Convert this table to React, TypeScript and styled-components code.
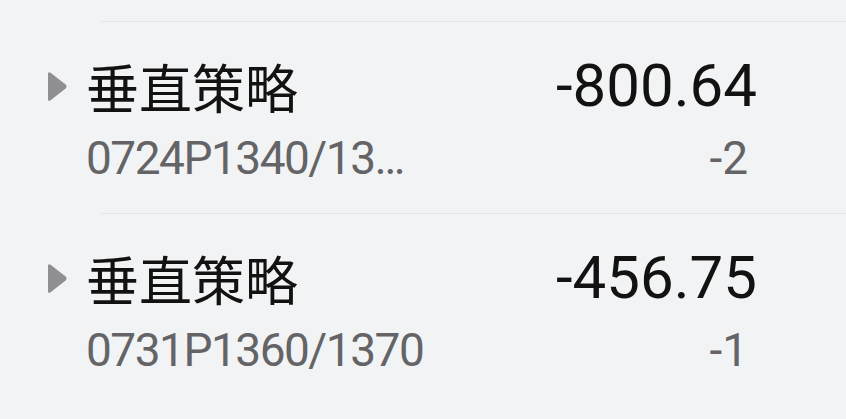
import React from 'react';
import styled, { createGlobalStyle } from 'styled-components';

const GlobalStyle = createGlobalStyle`
  html, body {
    margin: 0;
    padding: 0;
    background: #f2f3f5;
  }
  body {
    font-family: Roboto, "Noto Sans CJK SC", sans-serif;
  }
`;

type Position = {
  name: string;
  code: string;
  pnl: string;
  qty: string;
};

const positions: Position[] = [
  { name: '垂直策略', code: '0724P1340/13…', pnl: '-800.64', qty: '-2' },
  { name: '垂直策略', code: '0731P1360/1370', pnl: '-456.75', qty: '-1' }
];

const List = styled.div`
  box-sizing: border-box;
  padding-top: 21px;
  width: 846px;
  height: 419px;
  overflow: hidden;
`;

const Divider = styled.div`
  height: 1px;
  margin-left: 101px;
  background: #e3e4e6;
`;

const Row = styled.div`
  display: grid;
  grid-template-columns: 19px 1fr auto;
  grid-template-rows: 64px 50px;
  column-gap: 19px;
  row-gap: 15px;
  padding: 32px 89px 30px 48px;
  align-items: center;
`;

const Caret = styled.svg`
  grid-column: 1;
  grid-row: 1;
  width: 19px;
  height: 31px;
  display: block;
  fill: #8e8e93;
`;

const Title = styled.div`
  grid-column: 2;
  grid-row: 1;
  font-family: "Noto Sans CJK SC", sans-serif;
  font-size: 53px;
  line-height: 64px;
  color: #121212;
`;

const Value = styled.div`
  grid-column: 3;
  grid-row: 1;
  justify-self: end;
  font-family: Roboto, sans-serif;
  font-size: 60px;
  line-height: 64px;
  color: #121212;
`;

const Code = styled.div`
  grid-column: 2;
  grid-row: 2;
  font-family: Roboto, sans-serif;
  font-size: 46px;
  line-height: 50px;
  letter-spacing: -1.5px;
  color: #646467;
  white-space: nowrap;
`;

const Qty = styled.div`
  grid-column: 3;
  grid-row: 2;
  justify-self: end;
  padding-right: 9px;
  font-family: Roboto, sans-serif;
  font-size: 46px;
  line-height: 50px;
  color: #646467;
`;

function PositionRow ({ item }: { item: Position }) {
  return (
    <Row>
      <Caret viewBox='0 0 19 31'>
        <path d='M2.6 1.8 L17.6 13.6 Q19.4 15.5 17.6 17.4 L2.6 29.2 Q0 31 0 28 V3 Q0 0 2.6 1.8 Z' />
      </Caret>
      <Title>{item.name}</Title>
      <Value>{item.pnl}</Value>
      <Code>{item.code}</Code>
      <Qty>{item.qty}</Qty>
    </Row>
  );
}

export default function App () {
  return (
    <>
      <GlobalStyle />
      <List>
        {positions.map((p, i) => (
          <React.Fragment key={i}>
            <Divider />
            <PositionRow item={p} />
          </React.Fragment>
        ))}
      </List>
    </>
  );
}
